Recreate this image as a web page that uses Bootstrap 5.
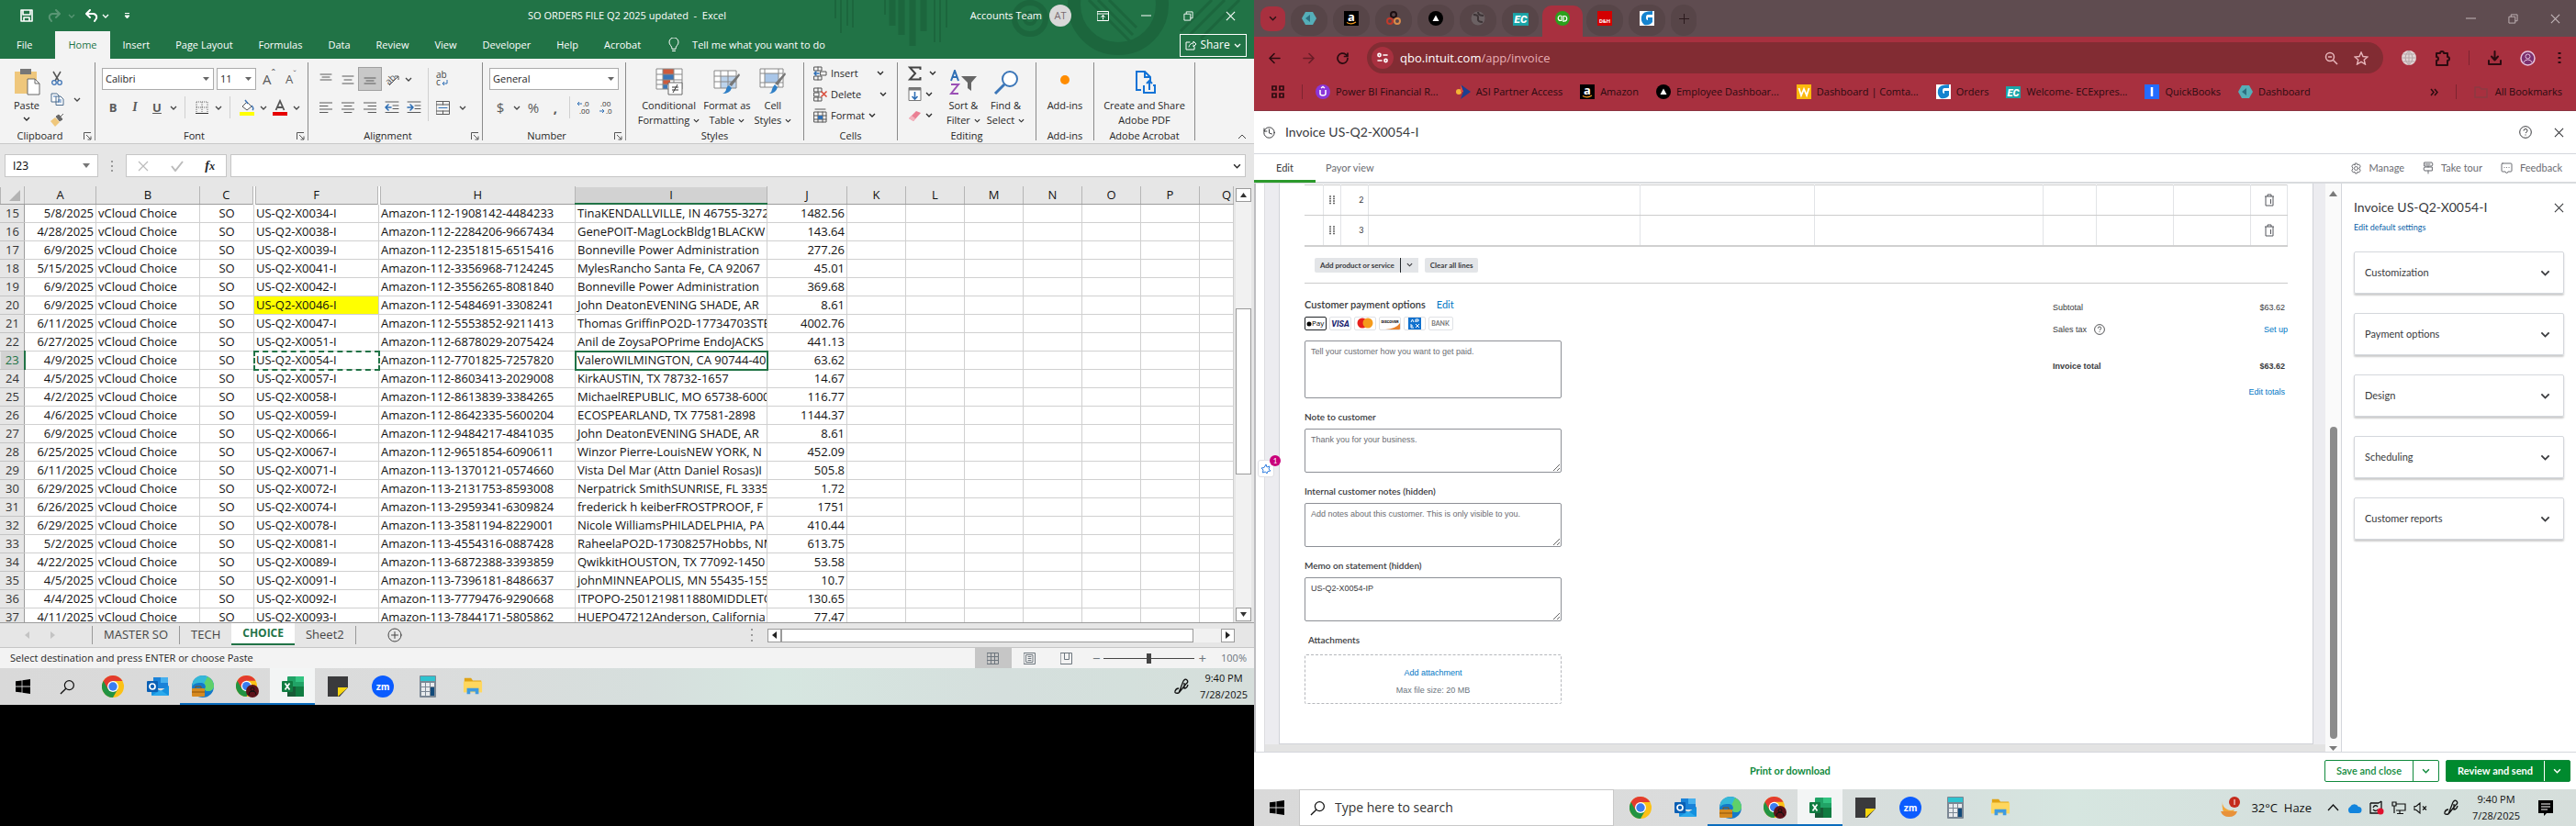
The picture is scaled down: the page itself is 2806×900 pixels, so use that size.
<!DOCTYPE html>
<html lang="en">
<head>
<meta charset="utf-8">
<meta name="viewport" content="width=device-width, initial-scale=1">
<title>Orders workbook and invoice</title>
<link href="https://cdn.jsdelivr.net/npm/bootstrap@5.3.0/dist/css/bootstrap.min.css" rel="stylesheet">
<style>
:root{--xl:#217346;--seg:"Open Sans","Noto Sans",sans-serif;--qb:Lato,"Open Sans",sans-serif;--arial:"Liberation Sans",Arial,sans-serif}
body{background:#000;font-family:var(--seg);font-size:11px;line-height:16px;color:#262626;overflow:hidden}
button{background:none;border:0;padding:0;color:inherit;font:inherit;line-height:inherit}
svg{display:block;flex:none}
a{text-decoration:none}
.ln{fill:none;stroke:currentColor;stroke-width:1;stroke-linecap:round;stroke-linejoin:round}
.desk{min-height:100vh}
.mon-a{flex:1366 1 0;min-width:0}
.mon-b{flex:1440 1 0;min-width:0;height:100vh}

/* spacing and size steps between Bootstrap's own */
.ml-7{margin-left:7px}.ml-11{margin-left:11px}.ml-17{margin-left:17px}.ml-22{margin-left:22px}.ml-28{margin-left:28px}.ml-34{margin-left:34px}
.mt-7{margin-top:7px}.mt-12{margin-top:12px}.mt-18{margin-top:18px}
.pl-7{padding-left:7px}.pl-10{padding-left:10px}
.g-35{gap:35px}.g-14{gap:14px}.g-20{gap:20px}
.t9{font-size:9px}.t12{font-size:12px}.t13{font-size:13px}.t15{font-size:15px}
.serif-i{font:italic 600 14px "Liberation Serif",serif}

/* workbook window */
.xl-top{background:var(--xl);color:#fff;position:relative}
.xl-deco{position:absolute;right:0;top:0;opacity:.55}
.xl-title{display:grid;grid-template-columns:1fr auto 1fr;height:34px;position:relative}
.xl-avatar{width:24px;height:24px;border-radius:50%;background:#d9d9d9;color:#7a6a70}
.xl-tabs{height:30px;position:relative}
.xl-tabs .tabbtn{padding:0 14px;height:30px}
.xl-tabs .tabbtn.on{background:#f3f3f3;color:var(--xl)}
.share{border:1px solid #fff;width:73px;height:25px;font-size:12px}
.ribbon{background:#f3f3f3;height:93px;border-bottom:1px solid #c9c9c9}
.grp{border-right:1px solid #8a8a8a;margin:4px 0;height:85px}
.grp .body{height:72px;padding-top:6px}
.grp .body.tight{padding-top:0}
.grp .cap{height:16px;text-align:center;position:relative}
.grp .cap svg{position:absolute;right:3px;top:4px}
.g-clip{width:104px}.g-font{width:232px}.g-align{width:190px}.g-num{width:156px}.g-style{width:194px}.g-cells{width:102px}.g-edit{width:151px}.g-add{width:63px}.g-acro{width:110px}
.rb{width:24px;height:24px;display:flex;align-items:center;justify-content:center;color:#5a5a5a}
.rb.on{background:#c8c8c8;outline:1px solid #a0a0a0}
.rb.short{height:22px}
.rc{width:12px;height:24px;display:flex;align-items:center;justify-content:center;color:#444}
.rc.mid{margin:22px 0 0 4px}
.cellrow{height:23px;display:flex;align-items:center;gap:4px}
.sep{width:1px;background:#d0d0d0;height:24px;margin:0 3px}
.sep.wide{margin:0 6px}
.sep.tall{height:58px}
.editcol{width:46px;padding-left:4px}
.xl-select{height:24px;border:1px solid #ababab;border-radius:0;background:#fff url("data:image/svg+xml,%3Csvg xmlns='http://www.w3.org/2000/svg' width='7' height='4'%3E%3Cpath d='M0 0h7L3.500 4z' fill='%23666'/%3E%3C/svg%3E") no-repeat right 4px center;appearance:none;padding:0 3px;color:#262626}
.xl-select.face{width:122px}.xl-select.size{width:43px;margin:0 2px 0 3px}.xl-select.fmt{width:141px}
.big{text-align:center;display:flex;flex-direction:column;align-items:center;white-space:nowrap}
.big.paste{width:42px}
.big svg.ic{margin-bottom:3px}
.fbar{background:#e6e6e6;padding:11px 9px 10px 5px}
.fbox{background:#fff;border:1px solid #c6c6c6;height:25px}
.fbox.nm{width:102px}.fbox.nm input{width:60px}.fbox.fx{width:110px;color:#bbb}
.sheet{background:#fff;height:475px;overflow:hidden;flex:1;min-width:0}
.grid-t{table-layout:fixed;width:100%;border-collapse:collapse;font-size:13px;line-height:19px;color:#111}
.grid-t td,.grid-t th{border:1px solid #d0d0d0;height:20px;padding:0 2px;white-space:nowrap;overflow:hidden;font-weight:400}
.grid-t thead th{background:#e6e6e6;border-color:#e6e6e6 #b5b5b5 #9c9c9c;text-align:center;height:18px;line-height:17px}
.grid-t tbody th{background:#e6e6e6;border-color:#c4c4c4 #9c9c9c #c4c4c4 #e6e6e6;text-align:center;color:#333;padding:0}
.grid-t thead th.cur{background:#d2d2d2;border-bottom:2px solid var(--xl)}
.grid-t tbody th.cur{background:#d2d2d2;border-right:2px solid var(--xl);color:var(--xl)}
.grid-t thead th.dbl{border-right:4px double #b5b5b5}
.grid-t .hl{background:#ff0}
.grid-t .ants{outline:2px dashed var(--xl);outline-offset:-1px}
.grid-t .pick{outline:2px solid var(--xl);outline-offset:-1px}
.c-n{width:26px}.c-a{width:78px}.c-b{width:113px}.c-c{width:59px}.c-f{width:136px}.c-h{width:214px}.c-i{width:209px}.c-j{width:87px}.c-k{width:64px}
.vsb{width:22px;background:#e6e6e6;padding:2px 3px 1px 2px}
.sbb{background:#fff;border:1px solid #9a9a9a;width:17px;height:15px;display:flex;align-items:center;justify-content:center}
.vsb .thumb{height:181px;margin-top:116px}
.vtrack{background:#f1f1f1;flex:1}
.hsb{margin-right:21px}.hsb .sbb{width:15px}.hsb .sbb.thumb{width:449px}.hsb .gap{width:30px;height:15px;background:#f1f1f1}
.sheettabs{background:#e6e6e6;height:28px;border-top:1px solid #9c9c9c;border-bottom:1px solid #c6c6c6;font-size:13px;color:#444}
.sheettabs .arrows{width:100px;gap:23px;padding-right:14px}
.sheettabs .st{padding:0 12px;height:24px}
.sheettabs .st.on{background:#fff;color:var(--xl);font-weight:700;font-size:12px;border-bottom:2px solid var(--xl)}
.sheettabs .dv{width:1px;height:20px;background:#999;margin-top:3px}
.status{background:#f3f3f3;height:22px}
.status .vw{width:40px;height:22px;display:flex;align-items:center;justify-content:center}
.status .vw.on{background:#c6c6c6}
.zoomr{appearance:none;width:99px;height:12px;background:linear-gradient(#444,#444) center/100% 1px no-repeat}
.zoomr::-webkit-slider-thumb{appearance:none;width:5px;height:11px;background:#444}

/* task bar */
.tbar{height:40px;background:linear-gradient(90deg,#d9d9d9 0%,#dbdcdc 34%,#d6dfdd 52%,#d6e6e0 62%,#d5dfdd 80%,#d4e0dc 90%,#d6dedb 100%);color:#111}
.tbar .ti{width:49px;height:40px;display:flex;align-items:center;justify-content:center;border-bottom:2px solid transparent;border-top:2px solid transparent}
.tbar .run{border-bottom-color:#0a6cbd}
.tbar .act{background:#f3f5f5;border-bottom-color:#0a6cbd}
.tray{padding-right:25px}
.clock{width:58px;text-align:center;line-height:18px}
.search{background:#fff;border:1px solid #c8c8c8;height:40px;width:343px;font-size:14px;padding-left:11px}
.search input{border:0;outline:0;background:none;flex:1;font:inherit}
.search input::placeholder{color:#333;opacity:1}

/* browser window */
.ch-tabs{background:#5f4c50;height:40px;padding-left:7px;color:#2b1216}
.ch-tab{width:46px;height:40px;position:relative;display:flex;align-items:center;justify-content:center}
.ch-tab.new{width:34px}
.ch-tab::before{content:"";position:absolute;inset:5px 3px 1px;border-radius:16px;background:#574548}
.ch-tab.on::before{background:#a8303f;inset:6px 1px 0;border-radius:10px 10px 0 0}
.ch-tab svg{position:relative}
.ch-menu{width:27px;height:27px;border-radius:9px;background:#a8303f;margin-right:3px}
.ch-win{padding-right:17px;color:#c4b8ba}
.ch-bar{background:#a8303f;height:81px;color:#2b0b10;border-bottom:1px solid #8b3440}
.ch-row{padding:6px 16px 0;gap:20px}
.omni{background:#822c33;border-radius:17px;height:34px;font-size:13px;color:#e7aeb4;padding:0 16px 0 5px;flex:1}
.omni .site{width:24px;height:24px;border-radius:50%;background:#a8303f;color:#fff}
.bm{display:flex;align-items:center;gap:6px;color:inherit;white-space:nowrap}
.bms{gap:19px;height:40px;padding:0 15px 0 19px}
.bar{width:1px;height:16px;background:#7d2430}

/* invoice page */
.qb{font-family:var(--qb);background:#fff;color:#393a3d;flex:1;min-height:0}
.qb-head{height:47px;border-bottom:1px solid #d4d7dc;font-size:14px;padding:0 13px 0 10px}
.qb-nav{height:32px;border-bottom:2px solid #d9dbde;color:#6b6c72;padding-right:15px}
.qb-nav .qt{height:32px;width:67px}
.qb-nav .qt.on{border-bottom:3px solid #2c9a2c;color:#393a3d;padding-top:2px}
.qb-main{flex:1;min-height:0;border-bottom:1px solid #d4d7dc;border-left:2px solid #bdbdc0}
.rail{width:10px;border-right:1px solid #dcdce0;position:relative;background:#fff}
.helper{position:absolute;left:2px;top:301px;width:18px;height:19px;background:#fff;border:1px solid #e0e0e4;border-radius:3px;z-index:2}
.helper .cnt{position:absolute;left:12px;top:-6px;width:12px;height:12px;border-radius:50%;background:#c9007a;color:#fff;font-size:8px;line-height:12px;text-align:center}
.canvas{padding:0 13px 8px 15px;flex:1;min-width:0;background:linear-gradient(#e3e3e3,#e3e3e3) bottom/100% 8px no-repeat,#ececf0}
.paper{background:#fff;border:1px solid #d0d2d8;border-width:0 1px 1px;padding:1px 27px 0;height:100%}
.lines{table-layout:fixed;width:100%;border-collapse:collapse;font-size:9px;border-top:1px solid #ccc;border-bottom:2px solid #d0d0d0}
.lines td{height:33px;border:1px solid #e2e4e7;border-bottom-color:#ccc;border-top-color:#ccc;padding:0 4px}
.lines td:first-child{border-left:0}
.l1{width:20px}.l2{width:19px}.l3{width:30px}.l5{width:17.700%}.l6{width:23.300%}.l7{width:58px}.l8{width:84px}.l9{width:40px}
.lineacts{padding:12px 11px 11px;border-bottom:1px solid #ccc}
.gbtn{background:#e3e5e8;font-size:8px;font-weight:700;height:16px;padding:0 6px;border-radius:2px}
.cpo{margin-top:15px;height:16px;gap:12px}
.cards{gap:3px;margin:5px 0 11px}
.lab{height:16px;font-size:10px;font-weight:600;margin:12px 0 5px;display:block}
.lnk{color:#0077c5}
.ta{width:280px;height:48px;min-height:48px;border:1px solid #8d9096;border-radius:2px;font:9px/12px var(--arial);padding:5px 6px;color:#393a3d;display:block}
.ta.first{height:63px;resize:none}
.ta::placeholder{color:#6b6c72;opacity:1}
.cardic{width:24px;height:15px;border:1px solid #e0e2e6;border-radius:2px;display:flex;align-items:center;justify-content:center;overflow:hidden}
.cardic.bank{width:27px}
.drop{width:280px;height:54px;border:1px dashed #b5b7bc;border-radius:2px;font:9px/19px var(--arial);text-align:center;padding-top:10px}
.totals{width:256px;font:9px/16px var(--arial)}
.totals .amt{padding-right:3px}
.totals .grand{margin-top:24px}
.qsb{width:17px;background:#fafafa;padding:8px 0 1px}
.qthumb{width:8px;border-radius:4px;background:#8b8b8b;margin-top:251px;flex:1}
.side{width:256px;border-left:1px solid #d4d7dc;padding:16px 13px 0}
.side-h{height:20px;font-size:14px}
.side-l{font-size:9px;line-height:12px;margin:6px 0 20px;color:#0a63a8}
.acc{height:46px;border:1px solid #d4d7dc;border-radius:2px;box-shadow:0 2px 2px #ccc;margin-bottom:21px;padding:0 14px 0 11px;width:100%;font-size:11px}
.qb-foot{height:40px;background:#fff;font-size:11px;font-weight:600;padding-right:6px;display:grid;grid-template-columns:1fr auto 1fr}
.gr{color:#108a3c;margin-right:266px}
.split{height:24px;border:1px solid #108a3c;border-radius:2px;color:#108a3c;display:flex}
.split>button{display:flex;align-items:center;justify-content:center;width:95px}
.split.fill>button{width:106px}
.split>button+button,.split.fill>button+button{width:28px;border-left:1px solid #108a3c}
.split.fill{background:#008a2e;color:#fff;font-weight:700}
.split.fill>button+button{border-color:#fff}
</style>
</head>
<body>
<svg class="d-none">
<symbol id="cv" viewBox="0 0 8 5"><path d="M1 1l3 3 3-3" fill="none" stroke="currentColor" stroke-width="1.300"/></symbol>
<symbol id="lch" viewBox="0 0 9 9"><path d="M.5 8V.5H8M3 3l5 5M8 4.500V8H4.500" fill="none" stroke="#555"/></symbol>
<symbol id="win" viewBox="0 0 16 16"><path d="M0 2.300L6.600 1.400v6.200H0zM7.400 1.300L16 0v7.600H7.400zM0 8.400h6.600v6.200L0 13.700zM7.400 8.400H16V16l-8.600-1.300z" fill="#000"/></symbol>
<symbol id="mag" viewBox="0 0 18 18"><circle cx="11" cy="7" r="5.300" fill="none" stroke="#111" stroke-width="1.300"/><path d="M7.200 10.800L1 17" stroke="#111" stroke-width="1.400"/></symbol>
<symbol id="chrome" viewBox="0 0 24 24"><circle cx="12" cy="12" r="12" fill="#fbc116"/><path d="M1.600 6A12 12 0 0 0 12 24l5.200-9L12 12z" fill="#229342"/><path d="M12 6h10.400A12 12 0 0 0 1.600 6l5.200 9z" fill="#e33b2e"/><circle cx="12" cy="12" r="6" fill="#fff"/><circle cx="12" cy="12" r="4.700" fill="#3a7df0"/></symbol>
<symbol id="outlook" viewBox="0 0 24 24"><path d="M7 2h16v12H7z" fill="#1a82d8"/><path d="M15 2h8v6h-8z" fill="#47b0ee"/><path d="M5 11l10 6 9-6v10q0 1-1 1H6q-1 0-1-1z" fill="#1490df"/><path d="M5 22l10-6 9 6z" fill="#2ba9ec"/><rect y="6" width="12" height="12" rx="1" fill="#0a5fb4"/><circle cx="6" cy="12" r="3" fill="none" stroke="#fff" stroke-width="1.700"/></symbol>
<symbol id="edge" viewBox="0 0 24 24"><circle cx="12" cy="12" r="12" fill="#1479c9"/><path d="M12 0a12 12 0 0 1 12 11c0 4-3 6-6.500 6-3 0-4-1.500-3-3 1.500-3-1-6-5-6C5 8 1 9 .3 13 0 5 5 0 12 0z" fill="#35b8d8"/><path d="M17 1.200A12 12 0 0 1 24 11c0 4-3 6-6.500 6-3 0-4-1.500-3-3 1-2 .4-4-1-5.500z" fill="#5fd06a"/><rect x="0" y="14" width="14" height="9" rx="1" fill="#d68a20"/><path d="M4 14v-2h6v2M0 18h14" fill="none" stroke="#8c5208"/></symbol>
<symbol id="chrome2" viewBox="0 0 26 24"><use href="#chrome" width="23" height="23"/><circle cx="18" cy="17" r="7" fill="#5c1119"/><circle cx="18" cy="15" r="2" fill="none" stroke="#111"/><path d="M14 21q0-4 4-4t4 4" fill="none" stroke="#111"/></symbol>
<symbol id="excel" viewBox="0 0 24 24"><rect x="6" y="1" width="18" height="22" rx="1" fill="#21a366"/><path d="M15 1h9v6h-9z" fill="#33c481"/><path d="M6 12h9v11H6z" fill="#185c37"/><path d="M15 12h9v11h-9z" fill="#107c41"/><rect y="6" width="12" height="12" rx="1" fill="#107c41"/><path d="M3.500 8.500l5 7M8.500 8.500l-5 7" stroke="#fff" stroke-width="1.700"/></symbol>
<symbol id="sticky" viewBox="0 0 22 22"><path d="M0 0h22v12L13 22H0z" fill="#3a3a3c"/><path d="M11 22V12h11z" fill="#f7d60d"/></symbol>
<symbol id="zm" viewBox="0 0 24 24"><circle cx="12" cy="12" r="12" fill="#0b5cff"/><text x="12" y="16" text-anchor="middle" font-family="Lato" font-weight="900" font-size="11" fill="#fff">zm</text></symbol>
<symbol id="calc" viewBox="0 0 18 24"><rect width="18" height="24" rx="1" fill="#7b8794"/><rect x="1" y="1" width="16" height="5" fill="#2fc3cf"/><path d="M2 8h4v4H2zM7 8h4v4H7zM12 8h4v4h-4zM2 13h4v4H2zM7 13h4v4H7zM2 18h4v4H2zM7 18h4v4H7z" fill="#e8ebee"/><path d="M12 13h4v9h-4z" fill="#124a7a"/></symbol>
<symbol id="folder" viewBox="0 0 24 22"><path d="M2 1h8l2 3h10v4H2z" fill="#e0a315"/><path d="M1 5h22v13H1z" fill="#ffd75e"/><path d="M5 20v-7h14v7h-4v-3H9v3z" fill="#3f9be0"/></symbol>
<symbol id="pen" viewBox="0 0 18 18"><path d="M6 16q-5 1-4-2 1-3 4-3M6 16L11 3q2-3 4-1t-1 4L6 16M12 5v6q3 0 4-4" fill="none" stroke="#111" stroke-width="1.300"/></symbol>
<symbol id="xx" viewBox="0 0 12 12"><path d="M1 1l10 10M11 1L1 11" fill="none" stroke="currentColor" stroke-width="1.200"/></symbol>
<symbol id="rest" viewBox="0 0 12 12"><path d="M1 3.500h7.500V11H1zM3.500 3.500V1H11v7.500H8.500" fill="none" stroke="currentColor"/></symbol>
<symbol id="help" viewBox="0 0 14 14"><circle cx="7" cy="7" r="6.300" fill="none" stroke="currentColor"/><path d="M5 5.500q0-2 2-2t2 1.700T7 8M7 9.500v1" fill="none" stroke="currentColor"/></symbol>
<symbol id="amz" viewBox="0 0 16 16"><path d="M0 0h16v16H0z" fill="#000"/><text x="8" y="10.500" text-anchor="middle" font-family="Open Sans" font-weight="700" font-size="13" fill="#fff">a</text><path d="M3 12.500q5 3 10-.5" fill="none" stroke="#f79c1d" stroke-width="1.200"/></symbol>
<symbol id="tri" viewBox="0 0 16 16"><circle cx="8" cy="8" r="8" fill="#000"/><path d="M8 4.500L11.500 11h-7z" fill="#fff"/></symbol>
<symbol id="hex" viewBox="0 0 16 16"><path d="M4 1h8l4 7-4 7H4L0 8z" fill="#55aeb8"/><path d="M9 4v8L4 8z" fill="#2d6f80"/></symbol>
<symbol id="ec" viewBox="0 0 16 16"><path d="M0 2h16v13H0z" fill="#1aa5a8"/><text x="8" y="12.500" text-anchor="middle" font-family="Roboto" font-style="italic" font-weight="900" font-size="11" fill="#fff">EC</text></symbol>
<symbol id="gg" viewBox="0 0 16 16"><path d="M0 0h16v16H0z" fill="#fff"/><path d="M14 0v4H9Q7 4 7 7t2 3V7h5v5q-3 4-9 3-4-3-3-9Q3 0 14 0z" fill="#1583cf"/></symbol>
<symbol id="trash" viewBox="0 0 12 14"><path d="M1 3h10M4 3V1h4v2M2 3v10h8V3M7.500 6v5" fill="none" stroke="#55565c"/></symbol>
<symbol id="drag" viewBox="0 0 6 10"><path d="M0 1h2M4 1h2M0 3.500h2M4 3.500h2M0 6h2M4 6h2M0 8.500h2M4 8.500h2" stroke="#666" stroke-width="1.500"/></symbol>
</svg>

<div class="desk d-flex align-items-start">

<!-- first monitor: the workbook -->
<section class="mon-a">
<header class="xl-top">
<svg class="xl-deco" width="470" height="64" viewBox="0 0 470 64"><g stroke="#185c37" fill="none"><path d="M14 0v20M20 0v36M27 0v28M33 0v30M68 0v16M122 0v46M128 0v46M135 0v30" stroke-width="2"/><path d="M76 0v28M86 0v38M98 0v50M110 0v34" stroke-width="7"/><circle cx="226" cy="20" r="17" stroke-width="6"/><circle cx="226" cy="20" r="6" stroke-width="4"/><circle cx="322" cy="5" r="48" stroke-width="14"/><path d="M290 0l46 46M300 0l38 38M312 0l30 30M390 34L424 0M400 38L438 0M412 42L454 0" stroke-width="3"/></g></svg>
<div class="xl-title">
<div class="d-flex align-items-center">
<button aria-label="Save" class="ml-22"><svg width="14" height="14" viewBox="0 0 14 14" class="ln"><path d="M1 1h12v12H1zM3 1v5h8V1M4 13V9h6v4" stroke-width="1.600"/></svg></button>
<button aria-label="Redo" class="d-flex align-items-center gap-1 opacity-25 ms-3"><svg width="14" height="14" viewBox="0 0 14 14" class="ln"><path d="M12 5H5q-4 1-3 5l2 3M9 1l4 4-4 4" stroke-width="2"/></svg><svg width="8" height="5" class="ms-1"><use href="#cv"/></svg></button>
<button aria-label="Undo" class="d-flex align-items-center gap-1 ml-11"><svg width="14" height="14" viewBox="0 0 14 14" class="ln"><path d="M2 5h7q4 1 3 5l-2 3M5 1L1 5l4 4" stroke-width="2"/></svg><svg width="8" height="5"><use href="#cv"/></svg></button>
<button aria-label="More" class="ms-3"><svg width="7" height="9" viewBox="0 0 7 9"><path d="M1 1.500h5M1 4h5L3.500 7z" fill="#fff" stroke="#fff"/></svg></button>
</div>
<div class="align-self-center">SO ORDERS FILE Q2 2025 updated&nbsp; -&nbsp; Excel</div>
<div class="d-flex align-items-center justify-content-end pe-3">
<span class="me-2">Accounts Team</span><span class="xl-avatar d-flex align-items-center justify-content-center">AT</span>
<div class="d-flex align-items-center g-35 ml-28 pe-1">
<button aria-label="Ribbon display"><svg width="13" height="11" viewBox="0 0 13 11" class="ln"><path d="M.5.500h12v10H.5zM.5 3h12M6.500 9V5M4.500 6.500l2-2 2 2"/></svg></button>
<button aria-label="Minimise"><svg width="11" height="2"><path d="M0 1h11" stroke="#fff"/></svg></button>
<button aria-label="Restore"><svg width="11" height="11"><use href="#rest"/></svg></button>
<button aria-label="Close"><svg width="11" height="11"><use href="#xx"/></svg></button>
</div></div>
</div>
<nav class="xl-tabs d-flex align-items-center">
<button class="tabbtn ms-1">File</button><button class="tabbtn on ml-11">Home</button><button class="tabbtn">Insert</button><button class="tabbtn">Page Layout</button><button class="tabbtn">Formulas</button><button class="tabbtn">Data</button><button class="tabbtn">Review</button><button class="tabbtn">View</button><button class="tabbtn">Developer</button><button class="tabbtn">Help</button><button class="tabbtn">Acrobat</button>
<button class="d-flex align-items-center ms-3 g-14"><svg width="12" height="16" viewBox="0 0 12 16" class="ln"><path d="M4 12q0-2-1.500-3.500a5 5 0 1 1 7 0Q8 10 8 12zM4.500 14.500h3"/></svg>Tell me what you want to do</button>
<button class="share ms-auto me-2 d-flex align-items-center justify-content-center gap-1"><svg width="12" height="12" viewBox="0 0 12 12" class="ln"><path d="M5 3H1v8h9V8M4 8q1-4 5-4V2l3 3-3 3V6"/></svg>Share<svg width="8" height="5"><use href="#cv"/></svg></button>
</nav>
</header>

<div class="ribbon d-flex">
<div class="grp g-clip"><div class="body d-flex ps-2">
<button class="big paste"><svg class="ic" width="30" height="30" viewBox="0 0 30 30"><path d="M2 4h24v24H2z" fill="#efc77c"/><path d="M8 1h12v6H8z" fill="#777"/><path d="M16 12h8l5 5v12H16z" fill="#fff" stroke="#666"/><path d="M24 12v5h5" fill="none" stroke="#666"/></svg>Paste<svg width="8" height="5" class="mt-1"><use href="#cv"/></svg></button>
<div><button class="rb short" aria-label="Cut"><svg width="14" height="16" viewBox="0 0 14 16"><path d="M3 1l6 10M11 1L5 11" stroke="#555" stroke-width="1.500"/><g fill="none" stroke="#3f74b5" stroke-width="1.300"><circle cx="4" cy="13" r="2.300"/><circle cx="10" cy="13" r="2.300"/></g></svg></button><button class="rb" aria-label="Copy"><svg width="15" height="14" viewBox="0 0 15 14"><path d="M1 1h6l2 2v7H1zM6 4h5l3 3v6.500H6z" fill="#fff" stroke="#4a6a8c"/><path d="M8 8h4M8 10h4M3 4h3" stroke="#3f74b5"/></svg></button><button class="rb short" aria-label="Format painter"><svg width="16" height="14" viewBox="0 0 16 14"><path d="M1 8l5-4 5 5-5 5z" fill="#efc77c"/><path d="M7 3l3-2 4 5-3 2zM12 3l3-3" fill="#666" stroke="#666"/></svg></button></div>
<button class="rc mid" aria-label="Copy options"><svg width="8" height="5"><use href="#cv"/></svg></button>
</div><div class="cap pe-3">Clipboard<svg width="9" height="9"><use href="#lch"/></svg></div></div>

<div class="grp g-font"><div class="body pl-7">
<div class="d-flex"><select class="xl-select face" aria-label="Font"><option>Calibri</option></select><select class="xl-select size" aria-label="Size"><option>11</option></select><button class="rb t15" aria-label="Grow font">A<sup>ˆ</sup></button><button class="rb t13" aria-label="Shrink font">A<sup>ˇ</sup></button></div>
<div class="d-flex align-items-center mt-7"><button class="rb fw-bold t13">B</button><button class="rb serif-i">I</button><button class="rb fw-bold text-decoration-underline t13">U</button><button class="rc" aria-label="Underline style"><svg width="8" height="5"><use href="#cv"/></svg></button><i class="sep wide"></i><button class="rb" aria-label="Borders"><svg width="14" height="14" viewBox="0 0 14 14" fill="none" stroke="#666"><path d="M1 1h12v12M1 1v12M7 1v12M1 7h12" stroke-dasharray="1 1"/><path d="M0 13.500h14" stroke="#333"/></svg></button><button class="rc" aria-label="Border list"><svg width="8" height="5"><use href="#cv"/></svg></button><i class="sep wide"></i><button class="rb" aria-label="Fill colour"><svg width="16" height="18" viewBox="0 0 16 18"><path d="M3 8l5-5 5 5-5 4z" fill="#fff" stroke="#555"/><path d="M6 1l3 4M13 7q3 3 1 5" fill="none" stroke="#3f74b5" stroke-width="1.500"/><path d="M0 14h16v4H0z" fill="#ff0"/></svg></button><button class="rc" aria-label="Fill list"><svg width="8" height="5"><use href="#cv"/></svg></button><button class="rb" aria-label="Font colour"><svg width="16" height="18" viewBox="0 0 16 18"><path d="M3.500 12L8 2l4.500 10M5 9h6" fill="none" stroke="#555" stroke-width="1.800"/><path d="M0 14h16v4H0z" fill="#e60000"/></svg></button><button class="rc" aria-label="Font colour list"><svg width="8" height="5"><use href="#cv"/></svg></button></div>
</div><div class="cap pe-3">Font<svg width="9" height="9"><use href="#lch"/></svg></div></div>

<div class="grp g-align"><div class="body d-flex pl-7">
<div>
<div class="d-flex"><button class="rb" aria-label="Top align"><svg width="14" height="14" viewBox="0 0 14 14" class="ln"><path d="M1 2h12M3 5h8M1 8h12"/></svg></button><button class="rb" aria-label="Middle align"><svg width="14" height="14" viewBox="0 0 14 14" class="ln"><path d="M1 4h12M3 8h8M1 12h12"/></svg></button><button class="rb on" aria-label="Bottom align"><svg width="14" height="14" viewBox="0 0 14 14" class="ln"><path d="M1 6h12M3 9h8M1 12h12"/></svg></button><button class="rb" aria-label="Orientation"><svg width="16" height="16" viewBox="0 0 16 16"><text x="0" y="12" font-size="10" font-family="Open Sans" fill="#555" transform="rotate(-45 6 8)">ab</text><path d="M5 15L15 5M11 5h4v4" fill="none" stroke="#555"/></svg></button><button class="rc" aria-label="Orientation list"><svg width="8" height="5"><use href="#cv"/></svg></button></div>
<div class="d-flex mt-7"><button class="rb" aria-label="Left"><svg width="14" height="14" viewBox="0 0 14 14" class="ln"><path d="M0 2h14M0 5.500h9M0 9h14M0 12.500h9"/></svg></button><button class="rb" aria-label="Centre"><svg width="14" height="14" viewBox="0 0 14 14" class="ln"><path d="M0 2h14M3 5.500h8M0 9h14M3 12.500h8"/></svg></button><button class="rb" aria-label="Right"><svg width="14" height="14" viewBox="0 0 14 14" class="ln"><path d="M0 2h14M5 5.500h9M0 9h14M5 12.500h9"/></svg></button><button class="rb" aria-label="Outdent"><svg width="16" height="14" viewBox="0 0 16 14" class="ln"><path d="M1 1h14M9 5h6M9 8.500h6M1 12.500h14"/><path d="M7 7H1M4 4L1 7l3 3" stroke="#2f6fb5" stroke-width="1.600"/></svg></button><button class="rb" aria-label="Indent"><svg width="16" height="14" viewBox="0 0 16 14" class="ln"><path d="M1 1h14M9 5h6M9 8.500h6M1 12.500h14"/><path d="M1 7h6M4 4l3 3-3 3" stroke="#2f6fb5" stroke-width="1.600"/></svg></button></div>
</div>
<i class="sep tall"></i>
<div><button class="rb" aria-label="Wrap text"><svg width="16" height="18" viewBox="0 0 16 18"><text x="1" y="8" font-size="10" font-family="Open Sans" fill="#444">ab</text><text x="1" y="16" font-size="10" font-family="Open Sans" fill="#444">c</text><path d="M13 10v4H8M10 12l-2 2 2 2" fill="none" stroke="#2f6fb5"/></svg></button><div class="d-flex mt-7"><button class="rb" aria-label="Merge"><svg width="15" height="15" viewBox="0 0 15 15" class="ln"><path d="M.5.500h14v14H.5zM.5 4h14M.5 11h14M7.500 1v3M7.500 11v3"/><path d="M3 7.500h9" stroke="#2f6fb5"/></svg></button><button class="rc ms-1" aria-label="Merge list"><svg width="8" height="5"><use href="#cv"/></svg></button></div></div>
</div><div class="cap pe-3">Alignment<svg width="9" height="9"><use href="#lch"/></svg></div></div>

<div class="grp g-num"><div class="body pl-7">
<select class="xl-select fmt d-block" aria-label="Number format"><option>General</option></select>
<div class="d-flex align-items-center mt-7"><button class="rb t15">$</button><button class="rc" aria-label="Currency list"><svg width="8" height="5"><use href="#cv"/></svg></button><button class="rb t15">%</button><button class="rb fw-bold t15">,</button><i class="sep"></i><button class="rb" aria-label="More decimals"><svg width="16" height="16" viewBox="0 0 16 16"><path d="M6 4H1M3 2L1 4l2 2" fill="none" stroke="#2f6fb5"/><text x="7" y="7" font-size="8" font-family="Open Sans" fill="#333">.0</text><text x="3" y="15" font-size="8" font-family="Open Sans" fill="#333">.00</text></svg></button><button class="rb" aria-label="Fewer decimals"><svg width="16" height="16" viewBox="0 0 16 16"><text x="2" y="7" font-size="8" font-family="Open Sans" fill="#333">.00</text><text x="8" y="15" font-size="8" font-family="Open Sans" fill="#333">.0</text><path d="M1 12h5M4 10l2 2-2 2" fill="none" stroke="#2f6fb5"/></svg></button></div>
</div><div class="cap pe-3">Number<svg width="9" height="9"><use href="#lch"/></svg></div></div>

<div class="grp g-style"><div class="body d-flex justify-content-center gap-1">
<button class="big"><svg class="ic" width="30" height="30" viewBox="0 0 30 30"><path d="M1 1h28v22H1z" fill="#fff"/><path d="M8 1h12v6H8zM8 13h8v5H8z" fill="#cf5a3c"/><path d="M8 7h12v6H8zM8 18h5v5H8z" fill="#3b76b8"/><path d="M1 1h28v22H1zM1 7h28M1 13h28M1 18h28M8 1v22M20 1v22" fill="none" stroke="#888"/><path d="M14 16h15v13H14z" fill="#fff" stroke="#666"/><path d="M18 21h7M18 24h7M24 18l-5 9" stroke="#333"/></svg><span>Conditional</span><span class="d-flex align-items-center gap-1">Formatting<svg width="7" height="5"><use href="#cv"/></svg></span></button>
<button class="big"><svg class="ic" width="30" height="30" viewBox="0 0 30 30"><path d="M1 3h24v19H1z" fill="#fff"/><path d="M8 9h17v13H8z" fill="#bcd3ec"/><path d="M1 3h24v19H1zM1 9h24M1 15h24M8 3v19M16 3v19" fill="none" stroke="#888"/><path d="M29 8l-9 12-3-2L28 6z" fill="#777"/><path d="M17 19l3 3q-2 6-10 6 4-2 4-5 1-3 3-4z" fill="#2f7fc6"/></svg><span>Format as</span><span class="d-flex align-items-center gap-1">Table<svg width="7" height="5"><use href="#cv"/></svg></span></button>
<button class="big"><svg class="ic" width="30" height="30" viewBox="0 0 30 30"><path d="M1 1h25v20H1z" fill="#fff"/><path d="M6 6h15v10H6z" fill="#a9c6e8"/><path d="M1 1h25v20H1zM1 6h25M1 16h25M6 1v20M21 1v20" fill="none" stroke="#888"/><path d="M29 7l-9 12-3-2L28 5z" fill="#777"/><path d="M17 18l3 3q-2 7-9 7 3-2 3-5 1-3 3-5z" fill="#2f7fc6"/></svg><span>Cell</span><span class="d-flex align-items-center gap-1">Styles<svg width="7" height="5"><use href="#cv"/></svg></span></button>
</div><div class="cap">Styles</div></div>

<div class="grp g-cells"><div class="body tight pl-10">
<button class="cellrow"><svg width="15" height="16" viewBox="0 0 15 16" class="ln" color="#555"><path d="M1 1h8v4H1zM1 11h8v4H1zM5 1v4M5 11v4M8 6h6v4H8z"/><path d="M6 8H1M3 6L1 8l2 2" stroke="#2f6fb5" stroke-width="1.500"/></svg>Insert<svg width="8" height="5" class="ms-3"><use href="#cv"/></svg></button>
<button class="cellrow"><svg width="15" height="16" viewBox="0 0 15 16" class="ln" color="#555"><path d="M1 1h8v4H1zM1 11h8v4H1zM5 1v4M5 11v4M1 6h5v4H1z"/><path d="M9 5l5 5M14 5l-5 5" stroke="#d9503f" stroke-width="1.700"/></svg>Delete<svg width="8" height="5" class="ms-3"><use href="#cv"/></svg></button>
<button class="cellrow"><svg width="15" height="16" viewBox="0 0 15 16" class="ln" color="#555"><path d="M1 4h13v11H1zM1 8h13M1 12h13M5 4v11M10 4v11M2 1h11"/><path d="M5 8h5v4H5z" fill="#2f6fb5" stroke="none"/></svg>Format<svg width="8" height="5"><use href="#cv"/></svg></button>
</div><div class="cap">Cells</div></div>

<div class="grp g-edit"><div class="body tight d-flex pl-7">
<div class="editcol">
<button class="cellrow" aria-label="Sum"><svg width="15" height="16" viewBox="0 0 15 16"><path d="M13.500 4V1.500H2L8 8l-6 6.500h11.500V12" fill="none" stroke="#444" stroke-width="2"/></svg><svg width="8" height="5" class="ms-1"><use href="#cv"/></svg></button>
<button class="cellrow" aria-label="Fill"><svg width="15" height="15" viewBox="0 0 15 15"><path d="M1 .5h13v14H1z" fill="#fff" stroke="#777"/><path d="M1 .5h13v3H1z" fill="#777"/><path d="M7.500 5v8M4.500 10l3 3 3-3" fill="none" stroke="#2f6fb5" stroke-width="1.600"/></svg><svg width="8" height="5"><use href="#cv"/></svg></button>
<button class="cellrow" aria-label="Clear"><svg width="15" height="12" viewBox="0 0 15 12"><path d="M1 9l8-8 5 2-8 9z" fill="#ea7f93"/><path d="M1 9l3-3 4 3-2 3z" fill="#f3b3be"/></svg><svg width="8" height="5"><use href="#cv"/></svg></button>
</div>
<button class="big pt-1 mt-1"><svg class="ic" width="30" height="28" viewBox="0 0 30 28"><path d="M2 12L6 1l4 11M3 8h6" fill="none" stroke="#2f6fb5" stroke-width="2"/><path d="M2 16h8L2 26h8" fill="none" stroke="#9a4fb5" stroke-width="2"/><path d="M13 7h17l-6 7v9l-4-3v-6z" fill="#666"/></svg><span>Sort &amp;</span><span class="d-flex align-items-center gap-1">Filter<svg width="7" height="5"><use href="#cv"/></svg></span></button>
<button class="big pt-1 mt-1 ml-7"><svg class="ic" width="28" height="28" viewBox="0 0 28 28"><circle cx="18" cy="10" r="8" fill="#fff" stroke="#3b76b8" stroke-width="2"/><path d="M12 16L2 26" stroke="#3b76b8" stroke-width="3"/></svg><span>Find &amp;</span><span class="d-flex align-items-center gap-1">Select<svg width="7" height="5"><use href="#cv"/></svg></span></button>
</div><div class="cap">Editing</div></div>

<div class="grp g-add"><div class="body d-flex justify-content-center"><button class="big"><svg class="ic" width="30" height="30" viewBox="0 0 30 30"><circle cx="15" cy="13" r="5" fill="#ff8c00"/></svg>Add-ins</button></div><div class="cap">Add-ins</div></div>
<div class="grp g-acro"><div class="body d-flex justify-content-center"><button class="big"><svg class="ic" width="30" height="30" viewBox="0 0 30 30"><path d="M11 24H6V4h9l6 6v5M15 4v6h6M14 19v8h12v-8h-2M20 24V14M17 17l3-3 3 3" fill="none" stroke="#1473d6" stroke-width="2"/></svg><span>Create and Share</span><span>Adobe PDF</span></button></div><div class="cap">Adobe Acrobat</div></div>
<button class="ms-auto align-self-end pb-1 pe-2" aria-label="Collapse ribbon"><svg width="10" height="7" viewBox="0 0 10 7"><path d="M1 6l4-4 4 4" fill="none" stroke="#444"/></svg></button>
</div>

<div class="fbar d-flex">
<label class="fbox nm d-flex align-items-center pe-2"><input aria-label="Name box" value="I23" class="border-0 bg-transparent p-0 ps-2 flex-fill t12"><svg width="8" height="5" viewBox="0 0 8 5"><path d="M0 0h8L4 5z" fill="#777"/></svg></label>
<svg width="30" height="25" viewBox="0 0 30 25"><path d="M15 7v12" stroke="#999" stroke-width="2" stroke-dasharray="2 3"/></svg>
<div class="fbox fx d-flex align-items-center justify-content-around"><svg width="12" height="12"><use href="#xx"/></svg><svg width="14" height="12" viewBox="0 0 14 12"><path d="M1 6l4 5 8-10" fill="none" stroke="#bbb" stroke-width="2"/></svg><span class="serif-i text-dark">f<small>x</small></span></div>
<div class="fbox flex-fill ms-1 d-flex align-items-center pe-1"><input aria-label="Formula" class="border-0 flex-fill"><svg width="9" height="6"><use href="#cv"/></svg></div>
</div>

<div class="d-flex">
<div class="sheet"><table class="grid-t"><colgroup><col class="c-n"><col class="c-a"><col class="c-b"><col class="c-c"><col class="c-f"><col class="c-h"><col class="c-i"><col class="c-j"><col class="c-k"><col class="c-k"><col class="c-k"><col class="c-k"><col class="c-k"><col class="c-k"><col></colgroup>
<thead><tr><th class="p-0"><svg width="12" height="12" viewBox="0 0 12 12" class="ms-auto me-1"><path d="M12 0v12H0z" fill="#b3b3b3"/></svg></th><th>A</th><th>B</th><th class="dbl">C</th><th class="dbl">F</th><th>H</th><th class="cur">I</th><th>J</th><th>K</th><th>L</th><th>M</th><th>N</th><th>O</th><th>P</th><th class="text-end">Q</th></tr></thead><tbody id="rows"></tbody></table></div>
<div class="vsb d-flex flex-column"><div class="sbb"><svg width="7" height="5" viewBox="0 0 7 5"><path d="M0 5h7L3.500 0z" fill="#333"/></svg></div><div class="vtrack"><div class="sbb thumb"></div></div><div class="sbb"><svg width="7" height="5" viewBox="0 0 7 5"><path d="M0 0h7L3.500 5z" fill="#333"/></svg></div></div>
</div>

<div class="sheettabs d-flex">
<div class="arrows d-flex align-items-center justify-content-center"><svg width="5" height="8" viewBox="0 0 5 8"><path d="M5 0v8L0 4z" fill="#c3c3c3"/></svg><svg width="5" height="8" viewBox="0 0 5 8"><path d="M0 0v8l5-4z" fill="#c3c3c3"/></svg></div>
<i class="dv"></i><button class="st">MASTER SO</button><i class="dv"></i><button class="st">TECH</button><button class="st on">CHOICE</button><button class="st">Sheet2</button><i class="dv"></i>
<button aria-label="New sheet" class="align-self-center ml-34"><svg width="16" height="16" viewBox="0 0 16 16" class="ln"><circle cx="8" cy="8" r="7"/><path d="M4.500 8h7M8 4.500v7"/></svg></button>
<div class="hsb ms-auto d-flex align-items-center"><svg width="2" height="14" class="me-3"><path d="M1 0v14" stroke="#999" stroke-width="2" stroke-dasharray="2 4"/></svg><div class="sbb"><svg width="5" height="8" viewBox="0 0 5 8"><path d="M5 0v8L0 4z" fill="#222"/></svg></div><div class="sbb thumb"></div><div class="gap"></div><div class="sbb"><svg width="5" height="8" viewBox="0 0 5 8"><path d="M0 0v8l5-4z" fill="#222"/></svg></div></div>
</div>
<div class="status d-flex align-items-center"><span class="ml-11">Select destination and press ENTER or choose Paste</span>
<div class="ms-auto d-flex align-items-center h-100 pe-2 text-secondary">
<button aria-label="Normal" class="vw on"><svg width="13" height="13" viewBox="0 0 13 13" class="ln"><path d="M.5.500h12v12H.5zM.5 4.500h12M.5 8.500h12M4.500.500v12M8.500.500v12"/></svg></button>
<button aria-label="Page layout" class="vw"><svg width="13" height="13" viewBox="0 0 13 13" class="ln"><path d="M.5.500h12v12H.5zM3 2.500h7v8H3zM5 4.500h3M5 6.500h3M5 8.500h3"/></svg></button>
<button aria-label="Page break" class="vw"><svg width="13" height="13" viewBox="0 0 13 13" class="ln"><path d="M.5.500h12v12H.5zM4.500.500v7h5v-7"/></svg></button>
<span class="t15 px-1 ms-1">−</span><input type="range" class="zoomr" aria-label="Zoom" value="50"><span class="t15 px-1">+</span><span class="ms-2 ps-1">100%</span></div>
</div>

<div class="tbar d-flex align-items-center">
<button class="ti" aria-label="Start"><svg width="16" height="16"><use href="#win"/></svg></button><button class="ti" aria-label="Search"><svg width="17" height="17"><use href="#mag"/></svg></button>
<button class="ti" aria-label="Chrome"><svg width="24" height="24"><use href="#chrome"/></svg></button><button class="ti" aria-label="Outlook"><svg width="24" height="24"><use href="#outlook"/></svg></button><button class="ti run" aria-label="Edge"><svg width="24" height="24"><use href="#edge"/></svg></button><button class="ti run" aria-label="Chrome work"><svg width="26" height="24"><use href="#chrome2"/></svg></button><button class="ti act" aria-label="Excel"><svg width="24" height="24"><use href="#excel"/></svg></button><button class="ti" aria-label="Sticky notes"><svg width="22" height="22"><use href="#sticky"/></svg></button><button class="ti" aria-label="Zoom"><svg width="24" height="24"><use href="#zm"/></svg></button><button class="ti" aria-label="Calculator"><svg width="18" height="24"><use href="#calc"/></svg></button><button class="ti" aria-label="Explorer"><svg width="22" height="22"><use href="#folder"/></svg></button>
<svg class="ms-auto" width="18" height="18"><use href="#pen"/></svg><div class="clock ms-2 me-1">9:40 PM<br>7/28/2025</div>
</div>
</section>

<!-- second monitor: the browser -->
<section class="mon-b d-flex flex-column">
<div class="ch-tabs d-flex align-items-center">
<button class="ch-menu d-flex align-items-center justify-content-center" aria-label="Search tabs"><svg width="9" height="6"><use href="#cv"/></svg></button>
<div class="ch-tab"><svg width="16" height="16"><use href="#hex"/></svg></div>
<div class="ch-tab"><svg width="16" height="16"><use href="#amz"/></svg></div>
<div class="ch-tab"><svg width="16" height="16" viewBox="0 0 16 16" fill="none" stroke-width="2"><circle cx="8" cy="4" r="3" stroke="#1d0f12"/><circle cx="4" cy="11" r="3" stroke="#c0392b"/><circle cx="12" cy="11" r="3" stroke="#d98b4a"/></svg></div>
<div class="ch-tab"><svg width="16" height="16"><use href="#tri"/></svg></div>
<div class="ch-tab"><svg width="16" height="16" viewBox="0 0 16 16"><circle cx="8" cy="8" r="7.500" fill="#6b6163"/><path d="M3 4q6 0 5 4t5 4M8 1q0 4 6 4" fill="none" stroke="#3d3436" stroke-width="2"/></svg></div>
<div class="ch-tab"><svg width="17" height="17"><use href="#ec"/></svg></div>
<div class="ch-tab on"><svg width="16" height="16" viewBox="0 0 16 16"><circle cx="8" cy="8" r="8" fill="#2ca01c"/><path d="M6.500 5H6a2.700 2.700 0 0 0 0 5.500h1V5M9.500 11h.5a2.700 2.700 0 0 0 0-5.500H9V12" fill="none" stroke="#fff" stroke-width="1.200"/></svg></div>
<div class="ch-tab"><svg width="16" height="16" viewBox="0 0 16 16"><path d="M0 0h16v16H0z" fill="#d40000"/><text x="8" y="13" text-anchor="middle" font-family="Roboto" font-weight="700" font-size="6" fill="#fff">D&amp;H</text></svg></div>
<div class="ch-tab"><svg width="16" height="16"><use href="#gg"/></svg></div>
<button class="ch-tab new" aria-label="New tab"><svg width="11" height="11" viewBox="0 0 11 11"><path d="M5.500 0v11M0 5.500h11" stroke="#2b1a1d"/></svg></button>
<div class="ch-win ms-auto d-flex align-items-center g-35"><svg width="11" height="2"><path d="M0 1h11" stroke="#c4b8ba"/></svg><svg width="11" height="11"><use href="#rest"/></svg><svg width="11" height="11"><use href="#xx"/></svg></div>
</div>
<div class="ch-bar">
<div class="ch-row d-flex align-items-center">
<div class="d-flex align-items-center ch-nav gap-4">
<button aria-label="Back"><svg width="13" height="13" viewBox="0 0 13 13" class="ln"><path d="M12 6.500H1M6 1.500l-5 5 5 5" stroke-width="1.600"/></svg></button>
<button aria-label="Forward" class="opacity-50"><svg width="13" height="13" viewBox="0 0 13 13" class="ln"><path d="M1 6.500h11M7 1.500l5 5-5 5" stroke-width="1.600"/></svg></button>
<button aria-label="Reload"><svg width="13" height="13" viewBox="0 0 13 13" class="ln"><path d="M12 6.500A5.500 5.500 0 1 1 10 2.300L12 4M12 1v3.500H8.500" stroke-width="1.700"/></svg></button></div>
<div class="omni d-flex align-items-center"><span class="site d-flex align-items-center justify-content-center"><svg width="12" height="12" viewBox="0 0 12 12" class="ln"><g stroke-width="1.600"><circle cx="2.500" cy="3" r="1.600"/><path d="M7 3h4M1 9h4"/><circle cx="9.500" cy="9" r="1.600"/></g></svg></span><span class="ml-7"><span class="text-white">qbo.intuit.com</span>/app/invoice</span>
<svg class="ms-auto" width="15" height="15" viewBox="0 0 15 15" fill="none" stroke="#e7b5ba" stroke-width="1.500"><circle cx="6" cy="6" r="4.500"/><path d="M9.500 9.500L14 14M4 6h4"/></svg><svg class="ml-17" width="16" height="15" viewBox="0 0 16 15"><path d="M8 1l2 4.500 5 .5-3.800 3.200L12.400 14 8 11.400 3.600 14l1.200-4.800L1 6l5-.5z" fill="none" stroke="#e7b5ba" stroke-width="1.400"/></svg></div>
<div class="d-flex align-items-center g-20"><svg width="16" height="16" viewBox="0 0 16 16"><circle cx="8" cy="8" r="8" fill="#e2d5d6"/><path d="M0 8h16M8 0v16M2 4h12M2 12h12M8 0q-8 8 0 16M8 0q8 8 0 16" fill="none" stroke="#b5a6a8"/></svg>
<svg width="17" height="17" viewBox="0 0 17 17" class="ln"><path d="M2 3h4q0-2 2-2t2 2h4v4q2 0 2 2t-2 2v5H2v-5q2 0 2-2T2 7z" stroke-width="2"/></svg>
<i class="bar"></i>
<svg width="15" height="16" viewBox="0 0 15 16" class="ln"><path d="M7.500 1v9M4 6.500l3.500 4 3.500-4M1 11v4h13v-4" stroke-width="2"/></svg>
<svg width="17" height="17" viewBox="0 0 17 17" fill="#7b2f6e" stroke="#e6c3dd"><circle cx="8.500" cy="8.500" r="7.500" stroke-width="1.500"/><circle cx="8.500" cy="6.500" r="2.500"/><path d="M4 13q1-3 4.500-3t4.500 3"/></svg>
<svg class="ms-1" width="4" height="14" viewBox="0 0 4 14"><path d="M2 1v2M2 6v2M2 11v2" stroke="#2b0b10" stroke-width="3"/></svg></div>
</div>
<nav class="bms d-flex align-items-center">
<svg width="14" height="14" viewBox="0 0 14 14" fill="none" stroke="currentColor" stroke-width="1.700"><path d="M1 1h4v4H1zM9 1h4v4H9zM1 9h4v4H1zM9 9h4v4H9z"/></svg><div class="d-flex align-items-center g-14"><i class="bar"></i>
<a class="bm" href="#"><svg width="16" height="16" viewBox="0 0 16 16"><circle cx="8" cy="8" r="8" fill="#8b35d8"/><path d="M5 6v4q0 2 3 2t3-2V6M6 4l2-1.500L10 4" fill="none" stroke="#fff" stroke-width="1.500"/></svg>Power BI Financial R...</a></div>
<a class="bm" href="#"><svg width="16" height="16" viewBox="0 0 16 16"><path d="M5 0l11 8L5 16l3-8z" fill="#1c3f8f"/><circle cx="3" cy="8" r="3" fill="#f5b335"/><path d="M5 0l3 8H5z" fill="#e0503c"/></svg>ASI Partner Access</a>
<a class="bm" href="#"><svg width="16" height="16"><use href="#amz"/></svg>Amazon</a>
<a class="bm" href="#"><svg width="16" height="16"><use href="#tri"/></svg>Employee Dashboar...</a>
<a class="bm" href="#"><svg width="16" height="16" viewBox="0 0 16 16"><path d="M0 0h16v16H0z" fill="#fbb90e"/><path d="M2.500 4l2.500 8 3-7 3 7 2.500-8" fill="none" stroke="#fff" stroke-width="1.800"/></svg>Dashboard | Comta...</a>
<a class="bm" href="#"><svg width="16" height="16"><use href="#gg"/></svg>Orders</a>
<a class="bm" href="#"><svg width="16" height="16"><use href="#ec"/></svg>Welcome- ECExpres...</a>
<a class="bm" href="#"><svg width="16" height="16" viewBox="0 0 16 16"><path d="M0 0h16v16H0z" fill="#236cff"/><path d="M8 3v10" stroke="#fff" stroke-width="2.500"/></svg>QuickBooks</a>
<a class="bm" href="#"><svg width="16" height="16"><use href="#hex"/></svg>Dashboard</a>
<svg class="ms-auto" width="9" height="9" viewBox="0 0 9 9" class="ln"><path d="M1 1l3 3.500L1 8M5 1l3 3.500L5 8" fill="none" stroke="#2b0b10" stroke-width="1.500"/></svg><i class="bar"></i>
<a class="bm gap-2" href="#"><svg width="15" height="13" viewBox="0 0 15 13"><path d="M1 1h5l2 2h6v9H1z" fill="none" stroke="#8c3a43" stroke-width="1.500"/></svg>All Bookmarks</a>
</nav>
</div>

<div class="qb d-flex flex-column">
<div class="qb-head d-flex align-items-center"><svg width="13" height="13" viewBox="0 0 13 13" class="ln"><circle cx="6.500" cy="6.500" r="5.700"/><path d="M6.500 3v4l3 1M1 2v3h3"/></svg><span class="ml-11">Invoice US-Q2-X0054-I</span><div class="d-flex align-items-center ms-auto gap-4"><button aria-label="Help"><svg width="14" height="14"><use href="#help"/></svg></button><button aria-label="Close"><svg width="11" height="11"><use href="#xx"/></svg></button></div></div>
<div class="qb-nav d-flex align-items-center"><button class="qt on">Edit</button><button class="ml-11">Payor view</button>
<div class="ms-auto d-flex align-items-center g-20"><button class="d-flex align-items-center gap-2"><svg width="13" height="13" viewBox="0 0 13 13" class="ln"><circle cx="6.500" cy="6.500" r="2"/><path d="M5.500 1h2l.5 1.700 1.700-.6 1.500 2L10 6.500l1.200 2.400-1.500 2-1.700-.6-.5 1.700h-2L5 10.300l-1.700.6-1.500-2L3 6.500 1.800 4.100l1.500-2L5 2.700z"/></svg>Manage</button><button class="d-flex align-items-center gap-2"><svg width="12" height="14" viewBox="0 0 12 14" class="ln"><path d="M2 1h8l1 2-1 2H2zM10 6H2L1 8l1 2h8zM6 5v1M6 10v3M3 3h5"/></svg>Take tour</button><button class="d-flex align-items-center gap-2"><svg width="13" height="13" viewBox="0 0 13 13" class="ln"><path d="M2 1h9q1 0 1 1v7q0 1-1 1H8l-1.500 2L5 10H2q-1 0-1-1V2q0-1 1-1zM4 5.500h.1M6.500 5.500h.1M9 5.500h.1"/></svg>Feedback</button></div></div>

<div class="qb-main d-flex">
<div class="rail"><button class="helper" aria-label="Assistant"><svg width="12" height="12" viewBox="0 0 12 12" class="mx-auto"><path d="M6 1l1 3 3-1-1 3 2 2-3 .5L7 11 5.500 9 2.500 10 3 7 1 5l3-.5z" fill="none" stroke="#2f7de0"/></svg><span class="cnt">1</span></button></div>
<div class="canvas"><div class="paper">
<table class="lines"><colgroup><col class="l1"><col class="l2"><col class="l3"><col><col class="l5"><col class="l6"><col class="l7"><col class="l8"><col class="l8"><col class="l9"></colgroup>
<tbody><tr><td></td><td><svg width="6" height="10" class="mx-auto"><use href="#drag"/></svg></td><td class="text-end">2</td><td></td><td></td><td></td><td></td><td></td><td></td><td><svg width="12" height="14" class="mx-auto"><use href="#trash"/></svg></td></tr>
<tr><td></td><td><svg width="6" height="10" class="mx-auto"><use href="#drag"/></svg></td><td class="text-end">3</td><td></td><td></td><td></td><td></td><td></td><td></td><td><svg width="12" height="14" class="mx-auto"><use href="#trash"/></svg></td></tr></tbody></table>
<div class="lineacts d-flex"><button class="gbtn">Add product or service</button><button class="gbtn border-start border-dark rounded-0" aria-label="More ways to add"><svg width="7" height="5"><use href="#cv"/></svg></button><button class="gbtn ml-7">Clear all lines</button></div>
<div class="d-flex justify-content-between">
<div>
<div class="cpo d-flex align-items-center"><span class="fw-semibold">Customer payment options</span><a class="lnk" href="#">Edit</a></div>
<div class="cards d-flex">
<span class="cardic border-dark"><svg width="22" height="12" viewBox="0 0 22 12"><circle cx="4" cy="7" r="2.500"/><text x="7" y="9" font-size="8" font-family="Open Sans">Pay</text></svg></span>
<span class="cardic"><svg width="22" height="12" viewBox="0 0 22 12"><text x="11" y="10" text-anchor="middle" font-size="9" font-style="italic" font-weight="800" font-family="Roboto" fill="#1a1f71">VISA</text></svg></span>
<span class="cardic"><svg width="20" height="12" viewBox="0 0 20 12"><circle cx="7" cy="6" r="5.500" fill="#e8201c"/><circle cx="13" cy="6" r="5.500" fill="#f59b1c"/></svg></span>
<span class="cardic"><svg width="22" height="14" viewBox="0 0 22 14"><path d="M6 14q12-1 16-7v7z" fill="#e8812c"/><text x="11" y="7" text-anchor="middle" font-size="4" font-weight="700" font-family="Roboto">DISCOVER</text></svg></span>
<span class="cardic"><svg width="14" height="13" viewBox="0 0 14 13"><path d="M0 0h14v13H0z" fill="#1071ce"/><path d="M3 5l1.500-3L6 5M8 5V2h3v2H8M3 7v4h3M3 9h2M8 7l4 4M12 7l-4 4" fill="none" stroke="#fff"/></svg></span>
<span class="cardic bank"><svg width="25" height="12" viewBox="0 0 25 12"><text x="12" y="9" text-anchor="middle" font-size="7" font-weight="700" font-family="Lato" fill="#777">BANK</text></svg></span></div>
<textarea class="ta first" aria-label="Payment instructions" placeholder="Tell your customer how you want to get paid."></textarea>
<label class="lab" for="n1">Note to customer</label><textarea class="ta" id="n1" placeholder="Thank you for your business."></textarea>
<label class="lab" for="n2">Internal customer notes (hidden)</label><textarea class="ta" id="n2" placeholder="Add notes about this customer. This is only visible to you."></textarea>
<label class="lab" for="n3">Memo on statement (hidden)</label><textarea class="ta" id="n3">US-Q2-X0054-IP</textarea>
<div class="lab ps-1 mb-2">Attachments</div>
<div class="drop"><a class="lnk d-block" href="#">Add attachment</a><span class="text-secondary">Max file size: 20 MB</span></div>
</div>
<div class="totals">
<div class="d-flex justify-content-between mt-18"><span>Subtotal</span><span class="amt">$63.62</span></div>
<div class="d-flex justify-content-between mt-2"><span class="d-flex align-items-center gap-2">Sales tax<svg width="12" height="12"><use href="#help"/></svg></span><a class="lnk" href="#">Set up</a></div>
<div class="grand d-flex justify-content-between fw-bold"><span>Invoice total</span><span class="amt">$63.62</span></div>
<div class="text-end amt mt-12"><a class="lnk" href="#">Edit totals</a></div>
</div>
</div>
</div></div>
<div class="qsb d-flex flex-column align-items-center"><svg width="9" height="6" viewBox="0 0 9 6"><path d="M0 6h9L4.500 0z" fill="#7a7a7a"/></svg><div class="qthumb"></div><svg class="mt-2" width="9" height="5" viewBox="0 0 9 5"><path d="M0 0h9L4.500 5z" fill="#7a7a7a"/></svg></div>
<aside class="side">
<div class="side-h d-flex align-items-center justify-content-between"><span>Invoice US-Q2-X0054-I</span><button aria-label="Close panel"><svg width="11" height="11"><use href="#xx"/></svg></button></div>
<a href="#" class="side-l d-block">Edit default settings</a>
<button class="acc d-flex align-items-center justify-content-between">Customization<svg width="11" height="7"><use href="#cv"/></svg></button>
<button class="acc d-flex align-items-center justify-content-between">Payment options<svg width="11" height="7"><use href="#cv"/></svg></button>
<button class="acc d-flex align-items-center justify-content-between">Design<svg width="11" height="7"><use href="#cv"/></svg></button>
<button class="acc d-flex align-items-center justify-content-between">Scheduling<svg width="11" height="7"><use href="#cv"/></svg></button>
<button class="acc d-flex align-items-center justify-content-between">Customer reports<svg width="11" height="7"><use href="#cv"/></svg></button>
</aside>
</div>
<div class="qb-foot align-items-center"><span></span><button class="gr fw-bold">Print or download</button>
<div class="d-flex justify-content-end"><div class="split"><button>Save and close</button><button aria-label="Save options"><svg width="9" height="6"><use href="#cv"/></svg></button></div><div class="split fill ml-7"><button>Review and send</button><button aria-label="Send options"><svg width="9" height="6"><use href="#cv"/></svg></button></div></div></div>
</div>

<div class="tbar d-flex align-items-center">
<button class="ti" aria-label="Start"><svg width="16" height="16"><use href="#win"/></svg></button>
<label class="search d-flex align-items-center"><svg width="17" height="17"><use href="#mag"/></svg><input class="ms-2" aria-label="Search" placeholder="Type here to search"></label>
<button class="ti ms-1" aria-label="Chrome"><svg width="24" height="24"><use href="#chrome"/></svg></button><button class="ti" aria-label="Outlook"><svg width="24" height="24"><use href="#outlook"/></svg></button><button class="ti run" aria-label="Edge"><svg width="24" height="24"><use href="#edge"/></svg></button><button class="ti run" aria-label="Chrome work"><svg width="26" height="24"><use href="#chrome2"/></svg></button><button class="ti act" aria-label="Excel"><svg width="24" height="24"><use href="#excel"/></svg></button><button class="ti" aria-label="Sticky notes"><svg width="22" height="22"><use href="#sticky"/></svg></button><button class="ti" aria-label="Zoom"><svg width="24" height="24"><use href="#zm"/></svg></button><button class="ti" aria-label="Calculator"><svg width="18" height="24"><use href="#calc"/></svg></button><button class="ti" aria-label="Explorer"><svg width="22" height="22"><use href="#folder"/></svg></button>
<div class="tray ms-auto d-flex align-items-center"><svg width="24" height="26" viewBox="0 0 24 26"><path d="M4 6a9 9 0 0 0 13 9q-2 5-8 5-7-2-5-14z" fill="#f2a73b"/><path d="M2 17h18q-2 6-9 6T2 17z" fill="#e8923a"/><circle cx="17" cy="7" r="6" fill="#c42b1c"/><path d="M17 4v6" stroke="#fff"/></svg><span class="text-nowrap t13 ml-11">32°C&nbsp; Haze</span>
<div class="d-flex align-items-center gap-2 ml-17"><svg width="13" height="8" viewBox="0 0 13 8"><path d="M1 7l5.500-6L12 7" fill="none" stroke="#111" stroke-width="1.300"/></svg>
<svg width="17" height="11" viewBox="0 0 17 11"><path d="M4 11a4 4 0 0 1 0-7 5 5 0 0 1 9 0 3.500 3.500 0 0 1 0 7z" fill="#1184dd"/></svg>
<svg width="16" height="16" viewBox="0 0 16 16"><path d="M1 3h9M1 3v11h9M13 1v9M10 3l3-2M4 8q2-4 5-1M9 10q-2 3-5 0" fill="none" stroke="#111" stroke-width="1.300"/><circle cx="12" cy="12" r="3.500" fill="#e0102c"/></svg>
<svg width="16" height="15" viewBox="0 0 16 15"><path d="M5 3h10v7H5M9 10v3M6 13.500h7M1 1h4v4H1zM3 5v8" fill="none" stroke="#111" stroke-width="1.200"/></svg>
<svg width="15" height="13" viewBox="0 0 15 13"><path d="M1 4.500h2l4-3.500v11L3 8.500H1zM10 4.500l4 4M14 4.500l-4 4" fill="none" stroke="#111" stroke-width="1.100"/></svg></div>
<svg class="ml-17" width="18" height="18"><use href="#pen"/></svg><div class="clock ml-11">9:40 PM<br>7/28/2025</div>
<svg class="ml-17" width="16" height="17" viewBox="0 0 16 17"><path d="M0 0h16v14H9l-3 3v-3H0z" fill="#000"/><path d="M3 4h10M3 7h10M3 10h7" stroke="#fff"/></svg></div>
</div>
</section>
</div>

<script src="https://cdn.jsdelivr.net/npm/bootstrap@5.3.0/dist/js/bootstrap.bundle.min.js"></script>
<script>
const orders = [
[15,'5/8/2025','X0034','112-1908142-4484233','TinaKENDALLVILLE, IN 46755-3272','1482.56'],
[16,'4/28/2025','X0038','112-2284206-9667434','GenePOIT-MagLockBldg1BLACKW','143.64'],
[17,'6/9/2025','X0039','112-2351815-6515416','Bonneville Power Administration','277.26'],
[18,'5/15/2025','X0041','112-3356968-7124245','MylesRancho Santa Fe, CA 92067','45.01'],
[19,'6/9/2025','X0042','112-3556265-8081840','Bonneville Power Administration','369.68'],
[20,'6/9/2025','X0046','112-5484691-3308241','John DeatonEVENING SHADE, AR','8.61'],
[21,'6/11/2025','X0047','112-5553852-9211413','Thomas GriffinPO2D-17734703STE','4002.76'],
[22,'6/27/2025','X0051','112-6878029-2075424','Anil de ZoysaPOPrime EndoJACKS','441.13'],
[23,'4/9/2025','X0054','112-7701825-7257820','ValeroWILMINGTON, CA 90744-40','63.62'],
[24,'4/5/2025','X0057','112-8603413-2029008','KirkAUSTIN, TX 78732-1657','14.67'],
[25,'4/2/2025','X0058','112-8613839-3384265','MichaelREPUBLIC, MO 65738-6000','116.77'],
[26,'4/6/2025','X0059','112-8642335-5600204','ECOSPEARLAND, TX 77581-2898','1144.37'],
[27,'6/9/2025','X0066','112-9484217-4841035','John DeatonEVENING SHADE, AR','8.61'],
[28,'6/25/2025','X0067','112-9651854-6090611','Winzor Pierre-LouisNEW YORK, N','452.09'],
[29,'6/11/2025','X0071','113-1370121-0574660','Vista Del Mar (Attn Daniel Rosas)I','505.8'],
[30,'6/29/2025','X0072','113-2131753-8593008','Nerpatrick SmithSUNRISE, FL 3335','1.72'],
[31,'6/26/2025','X0074','113-2959341-6309824','frederick h keiberFROSTPROOF, F','1751'],
[32,'6/29/2025','X0078','113-3581194-8229001','Nicole WilliamsPHILADELPHIA, PA','410.44'],
[33,'5/2/2025','X0081','113-4554316-0887428','RaheelaPO2D-17308257Hobbs, NM','613.75'],
[34,'4/22/2025','X0089','113-6872388-3393859','QwikkitHOUSTON, TX 77092-1450','53.58'],
[35,'4/5/2025','X0091','113-7396181-8486637','johnMINNEAPOLIS, MN 55435-155','10.7'],
[36,'4/4/2025','X0092','113-7779476-9290668','ITPOPO-2501219811880MIDDLETO','130.65'],
[37,'4/11/2025','X0093','113-7844171-5805862','HUEPO47212Anderson, California','77.47']];
document.getElementById('rows').innerHTML = orders.map(([n, d, x, a, who, amt]) => `<tr><th class="${n===23?'cur':''}">${n}</th><td class="text-end">${d}</td><td>vCloud Choice</td><td class="text-center">SO</td><td class="${n===20?'hl':n===23?'ants':''}">US-Q2-${x}-I</td><td>Amazon-${a}</td><td class="${n===23?'pick':''}">${who}</td><td class="text-end">${amt}</td>${'<td></td>'.repeat(7)}</tr>`).join('');
</script>
</body>
</html>
